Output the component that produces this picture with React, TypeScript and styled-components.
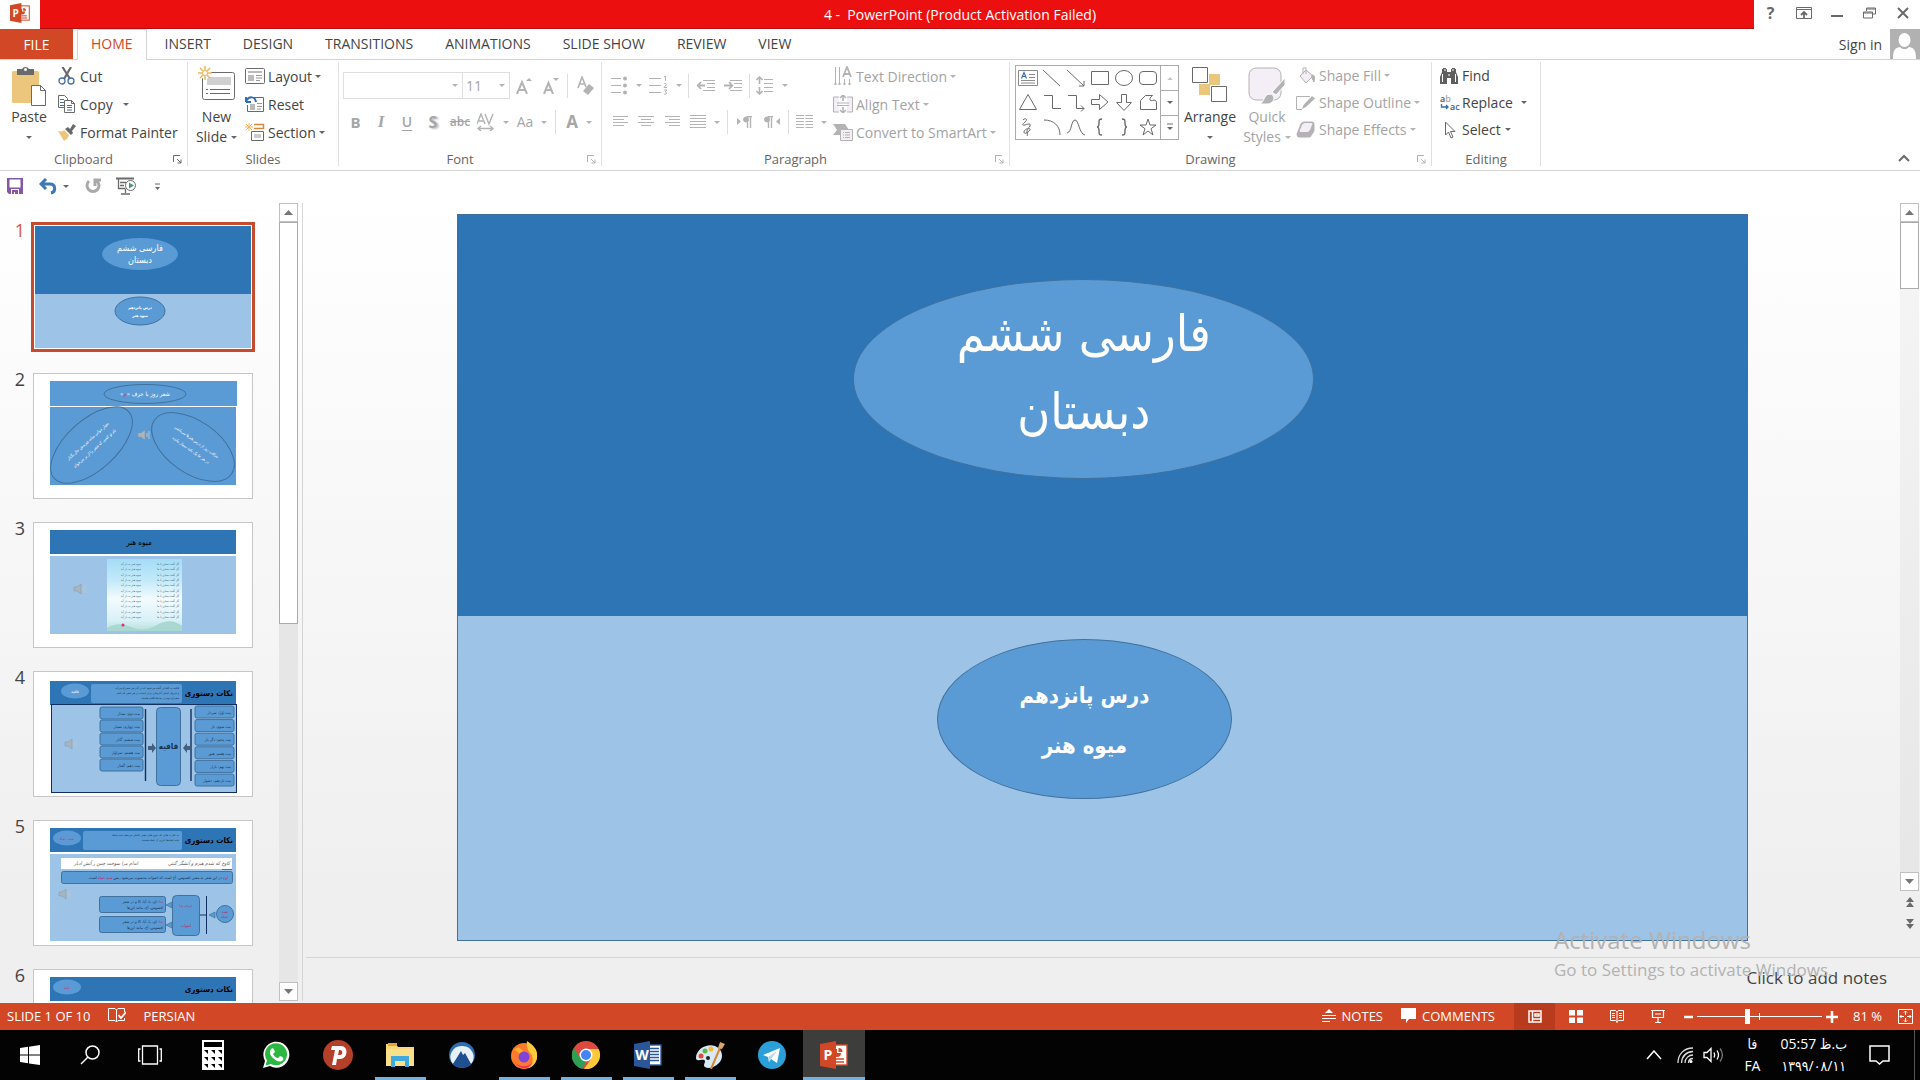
import React from "react";
import styled, { createGlobalStyle, css } from "styled-components";

const ui = `"Open Sans", "Noto Sans", "DejaVu Sans", sans-serif`;
const farsi = `"DejaVu Sans Condensed", "DejaVu Sans", sans-serif`;
const ink = "#444444";
const faded = "#a3a3a3";
const iconInk = "#6a6a6a";
const iconFaded = "#b3b3b3";
const line = "#d5d5d5";
const brand = "#d24726";

const Global = createGlobalStyle`
  * { box-sizing: border-box; }
  body { margin: 0; background: #fff; }
  button, select, input { font-family: ${ui}; margin: 0; }
  button { border: 0; background: none; padding: 0; color: inherit; font-size: inherit; }
  svg { display: block; flex: none; }
`;

const App_ = styled.div`
  display: flex;
  flex-direction: column;
  height: 100vh;
  overflow: hidden;
  font-family: ${ui};
  font-size: 14px;
  color: ${ink};
  background: linear-gradient(#fff 0, #fff 200px, #efefef 900px);
`;

/* ---------- title bar ---------- */
const TitleBar = styled.header`
  display: flex;
  height: 29px;
  background: #fff;
`;
const AppBadge = styled.div`
  width: 40px;
  display: flex;
  align-items: center;
  justify-content: center;
  padding-bottom: 3px;
`;
const TitleText = styled.div`
  flex: 1;
  display: flex;
  align-items: center;
  justify-content: center;
  padding-left: 126px;
  background: #eb0f0f;
  border-bottom: 1px solid #b01010;
  color: #fff;
  white-space: pre;
`;
const WindowControls = styled.div`
  display: flex;
  align-items: center;
  width: 166px;
  padding: 0 1px 3px 0;
`;
const WindowButton = styled.button`
  width: 33px;
  height: 26px;
  display: flex;
  align-items: center;
  justify-content: center;
  color: ${iconInk};
  font-weight: 700;
  font-size: 16px;
`;

/* ---------- tabs ---------- */
const TabRow = styled.nav`
  display: flex;
  align-items: stretch;
  height: 31px;
  border-bottom: 1px solid ${line};
  gap: 4px;
`;
const Tab = styled.button<{ $active?: boolean }>`
  padding: 0 13px 3px;
  border: 1px solid transparent;
  border-bottom: 0;
  ${(p) =>
    p.$active &&
    css`
      color: ${brand};
      border-color: ${line};
      background: #fff;
      margin-bottom: -1px;
    `}
`;
const FileTab = styled.button`
  width: 73px;
  background: ${brand};
  color: #fff;
`;
const SignIn = styled.button`
  margin-left: auto;
  display: flex;
  align-items: center;
  gap: 8px;
`;

/* ---------- ribbon ---------- */
const Ribbon = styled.section`
  display: flex;
  height: 111px;
  padding: 2px 0 4px;
  border-bottom: 1px solid ${line};
  background: #fff;
`;
const Group = styled.div<{ $w: number }>`
  display: flex;
  flex-direction: column;
  flex: none;
  width: ${(p) => p.$w}px;
  border-right: 1px solid #e1e1e1;
`;
const GroupBody = styled.div<{ $pad: number }>`
  display: flex;
  align-items: flex-start;
  flex: 1;
  padding-left: ${(p) => p.$pad}px;
`;
const GroupFoot = styled.div`
  display: flex;
  align-items: center;
  height: 14px;
  font-size: 13px;
  line-height: 14px;
  color: #666;
  text-align: center;
  span {
    flex: 1;
  }
  svg {
    margin: 0 5px 0 6px;
  }
`;
const Column = styled.div<{ $row: number; $left: number }>`
  display: grid;
  grid-auto-rows: ${(p) => p.$row}px;
  margin-left: ${(p) => p.$left}px;
  justify-items: start;
`;
const SmallButton = styled.button<{ $off?: boolean; $gap: number; $wide?: boolean }>`
  display: flex;
  align-items: center;
  gap: ${(p) => p.$gap}px;
  white-space: nowrap;
  color: ${(p) => (p.$off ? faded : ink)};
  & > i {
    margin-left: ${(p) => (p.$wide ? 6 : 0)}px;
  }
`;
const BigButton = styled.button<{ $w: number; $off?: boolean }>`
  display: flex;
  flex-direction: column;
  align-items: center;
  width: ${(p) => p.$w}px;
  padding-top: 4px;
  line-height: 20px;
  color: ${(p) => (p.$off ? faded : ink)};
`;
const BigIcon = styled.span`
  display: flex;
  align-items: flex-start;
  height: 41px;
`;
const LabelLine = styled.span`
  display: flex;
  align-items: center;
  gap: 4px;
  height: 20px;
`;
const Caret = styled.i<{ $off?: boolean }>`
  flex: none;
  width: 0;
  height: 0;
  border: 3px solid transparent;
  border-top-color: ${(p) => (p.$off ? iconFaded : "#666")};
  border-bottom: 0;
`;
const Rows = styled.div`
  display: grid;
  gap: 12px;
  padding-top: 10px;
`;
const ToolRow = styled.div<{ $h: number }>`
  display: flex;
  align-items: center;
  height: ${(p) => p.$h}px;
`;
const Tool = styled.button<{ $w: number }>`
  width: ${(p) => p.$w}px;
  height: 22px;
  display: flex;
  align-items: center;
  justify-content: center;
  gap: 8px;
  color: #a6a6a6;
`;
const Glyph = styled.span<{ $kind?: "b" | "i" | "u" | "s" | "x" | "A" }>`
  font-size: 14px;
  line-height: 18px;
  ${(p) => p.$kind === "b" && "font-weight: 700; font-size: 15px;"}
  ${(p) => p.$kind === "i" && `font: italic 700 17px "Liberation Serif", serif;`}
  ${(p) => p.$kind === "u" && "font-weight: 600; text-decoration: underline; text-underline-offset: 3px;"}
  ${(p) => p.$kind === "s" && "font-weight: 700; font-size: 16px; text-shadow: 2px 1px 2px #bbb;"}
  ${(p) => p.$kind === "x" && "font-weight: 600; font-size: 12px; text-decoration: line-through;"}
  ${(p) => p.$kind === "A" && "font-weight: 700; font-size: 17px;"}
`;
const Split = styled.span`
  width: 1px;
  height: 24px;
  margin: 0 3px;
  background: #dedede;
`;
const Combo = styled.label<{ $w: number }>`
  display: flex;
  align-items: center;
  width: ${(p) => p.$w}px;
  height: 27px;
  padding-right: 4px;
  border: 1px solid #dedede;
  & + & {
    margin-left: -1px;
  }
  select {
    flex: 1;
    min-width: 0;
    appearance: none;
    border: 0;
    background: none;
    padding: 0 3px;
    font-size: 14px;
    color: ${faded};
    opacity: 1;
  }
`;
const Gallery = styled.div`
  display: flex;
  width: 164px;
  height: 75px;
  margin-top: 3px;
  border: 1px solid #ababab;
`;
const GalleryGrid = styled.div`
  flex: 1;
  display: grid;
  grid-template-columns: repeat(6, 1fr);
  grid-template-rows: repeat(3, 1fr);
  button {
    display: grid;
    place-items: center;
  }
`;
const GalleryScroll = styled.div`
  display: grid;
  grid-template-rows: repeat(3, 1fr);
  width: 18px;
  border-left: 1px solid #ababab;
  button {
    display: grid;
    place-items: center;
  }
  button + button {
    border-top: 1px solid #ababab;
  }
`;
const Collapse = styled.button`
  margin: auto 6px 0 auto;
  padding: 4px;
`;

/* ---------- quick access ---------- */
const QuickBar = styled.div`
  display: flex;
  align-items: center;
  height: 32px;
  padding: 0 0 2px 7px;
`;
const QuickButton = styled.button<{ $right: number }>`
  display: flex;
  align-items: center;
  gap: 6px;
  margin-right: ${(p) => p.$right}px;
`;

/* ---------- workspace ---------- */
const Workspace = styled.div`
  display: flex;
  flex: 1;
  min-height: 0;
`;
const SlidePane = styled.aside`
  display: flex;
  width: 303px;
  padding-right: 4px;
  border-right: 1px solid ${line};
  margin-bottom: 2px;
`;
const SlideList = styled.ol`
  flex: 1;
  min-width: 0;
  margin: 0 0 -2px;
  padding: 21px 0 0;
  list-style: none;
  overflow: hidden;
`;
const SlideItem = styled.li<{ $on?: boolean }>`
  display: flex;
  height: 149px;
  color: ${(p) => (p.$on ? "#d9593c" : ink)};
`;
const SlideNumber = styled.span`
  width: 33px;
  padding-right: 8px;
  text-align: right;
  font-size: 18px;
  line-height: 13px;
`;
const Thumb = styled.button<{ $on?: boolean }>`
  width: 220px;
  height: 126px;
  background: #fff;
  border: 1px solid ${(p) => (p.$on ? "#fff" : "#c6c6c6")};
  outline: ${(p) => (p.$on ? "3px solid #c64c2e" : "none")};
  outline-offset: -1px;
  overflow: hidden;
  svg {
    margin: -1px;
  }
`;
const ScrollBar = styled.div<{ $track: string }>`
  display: flex;
  flex-direction: column;
  flex: none;
  width: 19px;
  background: ${(p) => p.$track};
`;
const ScrollButton = styled.button`
  display: grid;
  place-items: center;
  height: 19px;
  background: #fff;
  border: 1px solid #c0c0c0;
`;
const ScrollThumb = styled.div<{ $share: number }>`
  flex: ${(p) => p.$share} 0 0;
  background: #fff;
  border: 1px solid #ababab;
`;
const ScrollRest = styled.div<{ $share: number }>`
  flex: ${(p) => p.$share} 0 0;
`;
const PagedScroll = styled.div`
  display: flex;
  flex-direction: column;
  flex: none;
  width: 19px;
  margin-right: 1px;
  padding-bottom: 22px;
`;
const TallScroll = styled(ScrollBar)`
  flex: 1;
`;
const PageButton = styled.button`
  display: grid;
  place-items: center;
  height: 22px;
`;
const Editor = styled.main`
  flex: 1;
  display: flex;
  flex-direction: column;
  min-width: 0;
`;
const Stage = styled.div`
  flex: 1;
  min-height: 0;
  display: flex;
  justify-content: center;
  align-items: flex-start;
  padding: 11px 0 0 2px;
`;
const Slide = styled.article`
  position: relative;
  width: 81%;
  aspect-ratio: 16 / 9;
  display: flex;
  flex-direction: column;
`;
const SlideTop = styled.div`
  flex: 403;
  background: #2e75b6;
  border-top: 1px solid #41719c;
`;
const SlideBottom = styled.div`
  flex: 325;
  background: #9dc3e6;
  border: 1px solid #41719c;
  border-top: 0;
`;
const Oval = styled.div<{ $x: number; $y: number; $w: number; $h: number }>`
  position: absolute;
  left: ${(p) => p.$x}%;
  top: ${(p) => p.$y}%;
  width: ${(p) => p.$w}%;
  height: ${(p) => p.$h}%;
  display: flex;
  flex-direction: column;
  align-items: center;
  justify-content: center;
  border-radius: 50%;
  border: 1px solid #41719c;
  background: #5b9bd5;
  color: #fff;
  direction: rtl;
  white-space: nowrap;
`;
const BookTitle = styled.h1`
  margin: 0;
  padding-bottom: 12px;
  text-align: center;
  font: 400 50px/78px ${farsi};
`;
const LessonTitle = styled.h2`
  margin: 0;
  padding-top: 4px;
  text-align: center;
  font: 700 22px/50px ${farsi};
`;
const Notes = styled.div`
  position: relative;
  height: 46px;
  margin-left: 3px;
  border-top: 1px solid ${line};
  padding: 2px 33px 0 12px;
  input {
    width: 100%;
    height: 34px;
    border: 0;
    background: none;
    padding: 0;
    text-align: right;
    font-size: 17px;
    color: ${ink};
  }
  input::placeholder {
    color: ${ink};
    opacity: 1;
  }
`;
const Watermark = styled.div`
  position: absolute;
  right: 86px;
  bottom: 19px;
  width: 280px;
  pointer-events: none;
  white-space: nowrap;
  color: #b2b2b2;
  font-size: 17px;
  line-height: 28px;
  strong {
    display: block;
    font-weight: 400;
    font-size: 24px;
    line-height: 32px;
  }
`;

/* ---------- status bar ---------- */
const StatusBar = styled.footer`
  display: flex;
  align-items: center;
  height: 27px;
  padding: 0 7px;
  background: ${brand};
  color: #fff;
  font-size: 13px;
`;
const StatusItem = styled.button<{ $right: number }>`
  display: flex;
  align-items: center;
  gap: 6px;
  padding-bottom: 2px;
  margin-right: ${(p) => p.$right}px;
`;
const StatusRight = styled.div`
  display: flex;
  align-items: center;
  height: 100%;
  margin-left: auto;
`;
const ViewButton = styled.button<{ $on?: boolean }>`
  display: grid;
  place-items: center;
  width: 41px;
  height: 27px;
  background: ${(p) => (p.$on ? "#b83b1d" : "none")};
`;
const ZoomControl = styled.div`
  display: flex;
  align-items: center;
  gap: 4px;
  margin-left: 6px;
  input {
    appearance: none;
    width: 125px;
    height: 16px;
    margin: 0;
    background: linear-gradient(#fff, #fff) center / 100% 1px no-repeat,
      linear-gradient(#fff, #fff) center / 1px 7px no-repeat;
  }
  input::-webkit-slider-thumb {
    appearance: none;
    width: 5px;
    height: 15px;
    background: #fff;
  }
`;
const ZoomValue = styled.span`
  width: 60px;
  padding: 0 0 2px 15px;
`;

/* ---------- taskbar ---------- */
const TaskBar = styled.div`
  display: flex;
  height: 50px;
  background: #030303;
  color: #fff;
`;
const TaskButton = styled.button<{ $w: number; $run?: boolean; $on?: boolean }>`
  width: ${(p) => p.$w}px;
  height: 50px;
  display: flex;
  flex-direction: column;
  align-items: center;
  justify-content: center;
  background: ${(p) => (p.$on ? "#3d3d3b" : "none")};
  padding-top: 3px;
  &::after {
    content: "";
    width: ${(p) => (p.$on ? 62 : 51)}px;
    height: 3px;
    margin-top: auto;
    background: ${(p) => (p.$run || p.$on ? "#76b0df" : "transparent")};
  }
  svg {
    margin-top: auto;
  }
`;
const Tray = styled.div`
  display: flex;
  align-items: center;
  margin-left: auto;
`;
const TrayButton = styled.button<{ $right: number }>`
  margin-right: ${(p) => p.$right}px;
`;
const TrayText = styled.div<{ $right: number }>`
  display: grid;
  justify-items: center;
  margin-right: ${(p) => p.$right}px;
  font: 14px/22px "Open Sans", ${farsi};
  white-space: nowrap;
`;
const Edge = styled.span`
  width: 1px;
  height: 100%;
  margin-right: 5px;
  background: #555;
`;

/* ---------- icons ---------- */
type IcoProps = { w: number; h: number; c?: string; sw?: number; children: React.ReactNode };
const Ico = ({ w, h, c = iconInk, sw = 1, children }: IcoProps) => (
  <svg width={w} height={h} viewBox={`0 0 ${w} ${h}`} fill="none" stroke={c} strokeWidth={sw} aria-hidden="true">
    {children}
  </svg>
);

const OfficeLogo = ({ letter, color, dark, size }: { letter: string; color: string; dark: string; size: number }) => (
  <svg width={size} height={size} viewBox="0 0 28 28" aria-hidden="true">
    <rect x="13" y="4" width="14" height="20" fill="#fff" stroke={color} strokeWidth="1.4" />
    {letter === "P" ? (
      <g>
        <path d="M17 8a4 4 0 1 0 4 4h-4z" fill={color} />
        <path d="M18.5 7v4h4a4 4 0 0 0-4-4z" fill={color} />
        <path d="M16 18h8M16 21h8" stroke={color} strokeWidth="1.4" />
      </g>
    ) : (
      <path d="M16 7.500h9M16 10.500h9M16 13.500h9M16 16.500h9M16 19.500h9" stroke={color} strokeWidth="1.4" />
    )}
    <path d="M0 3 16 0v28L0 25z" fill={dark} />
    <text x="8" y="19" fill="#fff" fontSize="14" fontWeight="700" textAnchor="middle" fontFamily="Open Sans, sans-serif">
      {letter}
    </text>
  </svg>
);

const Launcher = ({ off }: { off?: boolean }) => (
  <Ico w={9} h={9} c={off ? iconFaded : iconInk}>
    <path d="M.5 7V.5H7M4 4l4 4M8 4.500V8H4.500" />
  </Ico>
);

const Lines = ({ xs, h = 12, w = 17 }: { xs: [number, number][]; h?: number; w?: number }) => (
  <Ico w={w} h={h} c={iconFaded}>
    {xs.map(([a, b], i) => (
      <path key={i} d={`M${a} ${i * 3 + 0.5}H${b}`} />
    ))}
  </Ico>
);

const shapeIcons: [string, React.ReactNode][] = [
  ["Text box", <><path d="M.5 2.500h19v15H.5zM11 6.500h6M11 9.500h6M3 12.500h14M3 15h14" stroke="#8a8a8a" /><path d="m3.500 10.500 2.500-6 2.500 6M4.500 8.500h3" stroke="#3b6fb0" strokeWidth="1.2" /></>],
  ["Line", <path d="m1 2 17 16" />],
  ["Arrow", <path d="m1 2 17 16M18 13v5h-5" />],
  ["Rectangle", <path d="M1.500 3.500h17v13h-17z" />],
  ["Oval", <ellipse cx="10" cy="10" rx="8.500" ry="7.500" />],
  ["Rounded rectangle", <rect x="1.500" y="3.500" width="17" height="13" rx="3.500" />],
  ["Triangle", <path d="M10 2.500 18.500 17.500h-17z" />],
  ["Elbow", <path d="M2 3.500h8.500v13H19" />],
  ["Elbow arrow", <path d="M2 3.500h8.500v13H18M15 13.500l3 3-3 3" />],
  ["Right arrow", <path d="M1.500 7.500h8v-5L18 10l-8.500 7.500v-5h-8z" />],
  ["Down arrow", <path d="M7.500 2.500v8h-5L10 18.500l7.500-8h-5v-8z" />],
  ["Freeform", <path d="M2.500 17.500v-9l5-5h7c-4 3-3 6 0 5 2-1 4 0 4 2v7z" />],
  ["Scribble", <path d="M5 3c3-3 5 0 2 2s-3 4 0 3 6-2 5 1-6 3-6 6 5 0 6-2-3-2-3 1 1 4 0 5" />],
  ["Arc", <path d="M2 3c10 0 16 6 16 15" />],
  ["Curve", <path d="M1 16c5-1 4-13 8-13s4 14 10 15" />],
  ["Left brace", <path d="M12 2c-3 0-3 1-3 4s-1 4-2 4c1 0 2 1 2 4s0 4 3 4" strokeWidth="1.4" />],
  ["Right brace", <path d="M8 2c3 0 3 1 3 4s1 4 2 4c-1 0-2 1-2 4s0 4-3 4" strokeWidth="1.4" />],
  ["Star", <path d="m10 2 2 6h6l-5 3.700 2 6.300-5-4-5 4 2-6.300L2 8h6z" />],
];

const UpTri = ({ c = "#777" }) => (
  <svg width="9" height="5" viewBox="0 0 9 5" aria-hidden="true"><path d="M4.500 0 9 5H0z" fill={c} /></svg>
);
const DownTri = ({ c = "#777" }) => (
  <svg width="9" height="5" viewBox="0 0 9 5" aria-hidden="true"><path d="M4.500 5 9 0H0z" fill={c} /></svg>
);

/* ---------- slide thumbnails ---------- */
const rtl = { direction: "rtl" as const, fontFamily: farsi };
const mid = "#5b9bd5";
const edge = "#41719c";
const Speaker = ({ x, y }: { x: number; y: number }) => (
  <g transform={`translate(${x} ${y})`}>
    <path d="M-5-2h3l4-3v10l-4-3h-3z" fill="#a9b4bf" stroke="#8795a3" strokeWidth=".5" />
    <path d="M4-2v4M6-4v8" stroke="#b9c6d2" />
  </g>
);
const Board = ({ children }: { children: React.ReactNode }) => (
  <svg width="220" height="126" viewBox="0 0 220 126" aria-hidden="true">{children}</svg>
);
type HeadingProps = { oval: string; body?: string[]; y?: number; left?: number };
const Heading = ({ oval, body, y = 8, left = 50 }: HeadingProps) => (
  <g>
    <rect x="17" y={y} width="186" height="24" fill="#2e75b6" />
    <ellipse cx={left - 16} cy={y + 10} rx="14" ry="7.500" fill={mid} />
    <text x={left - 16} y={y + 12} fontSize="4" textAnchor="middle" fill={y === 8 ? "#d6336c" : "#fff"} {...rtl}>{oval}</text>
    {body && <rect x={left} y={y + 3} width={149 - left} height="19" rx="2" fill={mid} />}
    {body && body.map((t, i) => (
      <text key={t} x="146" y={y + 8 + i * 5} fontSize="3" fill="#16324d" {...rtl}>{t}</text>
    ))}
    <text x="200" y={y + 15} fontSize="8" fontWeight="700" fill="#000" {...rtl}>نکات دستوری</text>
  </g>
);

const Slide1 = () => (
  <Board>
    <rect x="2" y="2" width="216" height="68" fill="#2e75b6" />
    <rect x="2" y="70" width="216" height="54" fill="#9dc3e6" />
    <ellipse cx="107" cy="30" rx="38" ry="16" fill={mid} />
    <text x="107" y="27" fontSize="9" textAnchor="middle" fill="#fff" {...rtl}>فارسی ششم</text>
    <text x="107" y="39" fontSize="9" textAnchor="middle" fill="#fff" {...rtl}>دبستان</text>
    <ellipse cx="107" cy="87" rx="25" ry="14" fill={mid} stroke={edge} />
    <text x="107" y="85" fontSize="4" fontWeight="700" textAnchor="middle" fill="#fff" {...rtl}>درس پانزدهم</text>
    <text x="107" y="93" fontSize="4" fontWeight="700" textAnchor="middle" fill="#fff" {...rtl}>میوه هنر</text>
  </Board>
);
const Slide2 = () => (
  <Board>
    <rect x="17" y="8" width="187" height="25" fill={mid} />
    <rect x="17" y="34" width="186" height="78" fill={mid} />
    <ellipse cx="112" cy="21" rx="41" ry="9.500" fill="none" stroke={edge} />
    <text x="112" y="23" fontSize="6" textAnchor="middle" fill="#fff" {...rtl}>شعر روز با حرف «<tspan fill="#d6336c">م</tspan>»</text>
    <g transform="translate(58.500 72) rotate(-42)">
      <ellipse rx="50" ry="25" fill="none" stroke={edge} />
      <text y="-4" fontSize="4" textAnchor="middle" fill="#fff" {...rtl}>معیار جوانی میانه هیزمش حال بگذار</text>
      <text y="6" fontSize="4" textAnchor="middle" fill="#fff" {...rtl}>نام تو کسی که شعر را از بر می‌خواند</text>
    </g>
    <g transform="translate(160 74) rotate(35)">
      <ellipse rx="47" ry="26" fill="none" stroke={edge} />
      <text y="-5" fontSize="4" textAnchor="middle" fill="#fff" {...rtl}>مراقب روز از درس هنرها می‌باشی</text>
      <text y="5" fontSize="4" textAnchor="middle" fill="#fff" {...rtl}>در هر جا یک نکته بسیار مانده</text>
    </g>
    <Speaker x={110} y={62} />
  </Board>
);
const Slide3 = () => (
  <Board>
    <rect x="17" y="8" width="186" height="24" fill="#2e75b6" />
    <rect x="17" y="34" width="186" height="78" fill="#9dc3e6" />
    <text x="106" y="23" fontSize="8" textAnchor="middle" fill="#000" {...rtl}>میوه هنر</text>
    <defs>
      <linearGradient id="sky" x1="0" y1="0" x2="0" y2="1">
        <stop offset="0" stopColor="#a4dcf6" /><stop offset=".3" stopColor="#c3eafa" /><stop offset=".55" stopColor="#f3fbfe" /><stop offset=".85" stopColor="#d9f1f8" /><stop offset="1" stopColor="#b5e0d8" />
      </linearGradient>
    </defs>
    <rect x="74" y="37" width="75" height="72" fill="url(#sky)" />
    <path d="M74 106q12-7 24-1t26-2 25 1v5H74z" fill="#a8d8cf" />
    {Array.from({ length: 11 }, (_, i) => (
      <g key={i} fontSize="3" fill="#4a6270">
        <text x="146" y={43 + i * 5.3} {...rtl}>گل گفت سخن با ما</text>
        <text x="108" y={43 + i * 5.3} {...rtl}>میوه هنر به بار آید</text>
      </g>
    ))}
    <circle cx="90" cy="103" r="1.500" fill="#d6336c" />
    <Speaker x={46} y={67} />
  </Board>
);
const Slide4 = () => (
  <Board>
    <Heading y={10} left={58} oval="قافیه" body={["قافیه به کلماتی گفته می‌شود که در آخر هر مصراع می‌آید", "و حروف اصلی آخرشان برابر است، در هر شعر که باشد", "مصراع دوم در بیت‌ها قافیه هستند."]} />
    <rect x="18.500" y="33.500" width="185" height="88" fill="#9dc3e6" stroke="#12305f" />
    {["بیت اول: سردار", "بیت سوم: بار", "بیت پنجم: دگر بار", "بیت هفتم: هنوز", "بیت نهم: بازار", "بیت یازدهم: دشوار"].map((t, i) => (
      <g key={t}>
        <rect x="162" y={35 + i * 13.6} width="39" height="12" rx="2" fill={mid} stroke={edge} />
        <text x="198" y={43 + i * 13.6} fontSize="4" fill="#16324d" {...rtl}>{t}</text>
      </g>
    ))}
    {["بیت دوم: نمدار", "بیت چهارم: بسیار", "بیت ششم: گذار", "بیت هشتم: سزاوار", "بیت دهم: گفتار"].map((t, i) => (
      <g key={t}>
        <rect x="67" y={36 + i * 13} width="43" height="12" rx="2" fill={mid} stroke={edge} />
        <text x="107" y={44 + i * 13} fontSize="4" fill="#16324d" {...rtl}>{t}</text>
      </g>
    ))}
    <rect x="123.500" y="36.500" width="24" height="78" rx="4" fill={mid} stroke={edge} />
    <text x="135.500" y="78" fontSize="8" fontWeight="700" textAnchor="middle" fill="#16324d" {...rtl}>قافیه</text>
    <path d="M112.500 38v72M158 38v72" stroke="#12305f" strokeWidth="1.400" />
    <path d="M115 75h4v-3l4 5-4 5v-3h-4zM158 75h-4v-3l-4 5 4 5v-3h4z" fill="#41607f" />
    <Speaker x={37} y={73} />
  </Board>
);
const Slide5 = () => (
  <Board>
    <Heading oval="شبه جمله" body={["به عبارت هایی که بدون فعل معنی کاملی می‌دهند شبه جمله", "شبه جمله‌ها جزیی از جمله هستند."]} />
    <rect x="17" y="34" width="186" height="87" fill="#9dc3e6" />
    <rect x="28" y="38" width="171" height="11" fill="#fff" />
    <text x="197" y="45" fontSize="5" fontStyle="italic" fill="#555" {...rtl}>کاوخ که شدم هیزم و آتشگر گیتی</text>
    <text x="105" y="45" fontSize="5" fontStyle="italic" fill="#555" {...rtl}>اندام مرا سوخت چنین ز آتش ادبار</text>
    <path d="M189 49.500h10" stroke="#d6334c" />
    <rect x="28.500" y="51.500" width="171" height="12" rx="2" fill={mid} stroke={edge} />
    <text x="195" y="59" fontSize="4" fill="#16324d" {...rtl}><tspan fill="#c2255c">آوخ</tspan> در این شعر به معنی افسوس، آخ است که اصوات محسوب می‌شود، پس <tspan fill="#c2255c">شبه جمله</tspan> است.</text>
    {[76, 96].map((y) => (
      <g key={y}>
        <rect x="66.500" y={y + 0.5} width="66" height="16" rx="2" fill={mid} stroke={edge} />
        <text x="130" y={y + 7} fontSize="4" fill="#16324d" {...rtl}><tspan fill="#c2255c">ندا:</tspan> ای، یا، آیا، الا و در شعر</text>
        <text x="130" y={y + 13} fontSize="4" fill="#16324d" {...rtl}>افسوس، آخ، مانند این‌ها</text>
        <path d={`M139 ${y + 6}v6l-6-3z`} fill={mid} stroke={edge} strokeWidth=".7" />
      </g>
    ))}
    <rect x="139.500" y="75.500" width="27" height="40" rx="4" fill={mid} stroke={edge} />
    <text x="153" y="87" fontSize="4" textAnchor="middle" fill="#c2255c" {...rtl}>حرف ندا</text>
    <text x="153" y="107" fontSize="4" textAnchor="middle" fill="#c2255c" {...rtl}>اصوات</text>
    <path d="M167 95h6M173.500 76v38" stroke="#12305f" />
    <path d="M182 92v6l-6-3z" fill={mid} stroke={edge} strokeWidth=".7" />
    <circle cx="192" cy="94" r="8.500" fill={mid} stroke={edge} />
    <text x="192" y="93" fontSize="4" textAnchor="middle" fill="#c2255c" {...rtl}>شبه</text>
    <text x="192" y="98" fontSize="4" textAnchor="middle" fill="#c2255c" {...rtl}>جمله</text>
    <Speaker x={31} y={74} />
  </Board>
);
const Slide6 = () => (
  <Board><Heading oval="نکته" /></Board>
);
const slides = [Slide1, Slide2, Slide3, Slide4, Slide5, Slide6];

const CalcIcon = () => (
  <svg width="22" height="30" viewBox="0 0 22 30" aria-hidden="true">
    <rect width="22" height="30" fill="#fff" /><rect x="2" y="2" width="18" height="5" fill="#000" />
    {[10, 17, 24].map((y) => [2, 9, 16].map((x) => <path key={`${x}-${y}`} d={`M${x} ${y}h4v4z`} fill="#000" />))}
  </svg>
);

export default function App() {
  return (
    <App_>
      <Global />
      <TitleBar>
        <AppBadge><OfficeLogo letter="P" color="#d24726" dark="#d24726" size={20} /></AppBadge>
        <TitleText>4 -  PowerPoint (Product Activation Failed)</TitleText>
        <WindowControls>
          <WindowButton aria-label="Help">?</WindowButton>
          <WindowButton aria-label="Ribbon display options">
            <Ico w={16} h={12}><path d="M.5.5h15v11H.5zM1 2.500h14" /><path d="M8 11V5M5 8l3-3 3 3" strokeWidth="1.800" /></Ico>
          </WindowButton>
          <WindowButton aria-label="Minimize"><Ico w={12} h={12} sw={2}><path d="M0 9h12" /></Ico></WindowButton>
          <WindowButton aria-label="Restore"><Ico w={13} h={12}><path d="M3.500 4V1h9v6H10M3.500 2h9M.5 5h9v6h-9zM.5 6h9" /></Ico></WindowButton>
          <WindowButton aria-label="Close"><Ico w={12} h={12} sw={2}><path d="m1 1 10 10M11 1 1 11" /></Ico></WindowButton>
        </WindowControls>
      </TitleBar>

      <TabRow>
        <FileTab>FILE</FileTab>
        {["HOME", "INSERT", "DESIGN", "TRANSITIONS", "ANIMATIONS", "SLIDE SHOW", "REVIEW", "VIEW"].map((t, i) => (
          <Tab key={t} $active={i === 0}>{t}</Tab>
        ))}
        <SignIn>
          Sign in
          <svg width="30" height="30" viewBox="0 0 30 30" aria-hidden="true">
            <rect width="30" height="30" fill="#b1b1b1" />
            <ellipse cx="14.500" cy="11" rx="6" ry="7" fill="#fff" />
            <path d="M3 30c0-9 2-11 7-12 3 3 6 3 9 0 5 1 7 3 7 12z" fill="#fff" />
          </svg>
        </SignIn>
      </TabRow>

      <Ribbon>
        <Group $w={188}>
          <GroupBody $pad={7}>
            <BigButton $w={44}>
              <BigIcon>
                <svg width="34" height="40" viewBox="0 0 34 40" aria-hidden="true">
                  <rect x="0" y="5" width="27" height="32" rx="1.500" fill="#ecc67c" />
                  <path d="M5 3h5a4 4 0 0 1 7 0h5v6H5z" fill="#6a6a6a" /><circle cx="13.500" cy="3.500" r="1.500" fill="#fff" />
                  <path d="M19.500 19.500h9l5 5v15h-14zM28.500 19.500v5h5" fill="#fff" stroke="#6a6a6a" />
                </svg>
              </BigIcon>
              <LabelLine>Paste</LabelLine>
              <LabelLine><Caret /></LabelLine>
            </BigButton>
            <Column $row={28} $left={7}>
              <SmallButton $gap={4}>
                <Ico w={18} h={18}><path d="M4.500 0 12 12M13 0 6 12" strokeWidth="2.200" /><g stroke="#4472a8" strokeWidth="1.300"><circle cx="4" cy="14" r="3" /><circle cx="13" cy="14" r="3" /></g></Ico>
                Cut
              </SmallButton>
              <SmallButton $gap={4} $wide>
                <Ico w={18} h={18}><path d="M.5.5h6l3 3v9h-9z" fill="#fff" /><path d="M6.500 5.500h7l3 3v9h-10z" fill="#fff" /><path d="M13.500 5.500v3h3" /><path d="M2 4.500h4M2 7.500h4M2 10.500h4M9 10.500h5M9 12.500h5M9 15h5" stroke="#4472a8" /></Ico>
                Copy<Caret />
              </SmallButton>
              <SmallButton $gap={4}>
                <svg width="18" height="18" viewBox="0 0 18 18" aria-hidden="true"><path d="M0 8c4 1 5 0 6-1l5 5c-1 3-2 4-5 6z" fill="#ecc67c" /><path d="m7 6 3-2 2 2 3-5 3 2-4 5 1 2-2 2z" fill="#6a6a6a" /></svg>
                Format Painter
              </SmallButton>
            </Column>
          </GroupBody>
          <GroupFoot><span>Clipboard</span><Launcher /></GroupFoot>
        </Group>

        <Group $w={151}>
          <GroupBody $pad={6}>
            <BigButton $w={45}>
              <BigIcon>
                <Ico w={38} h={36}>
                  <rect x="4.500" y="6.500" width="32" height="27" rx="2" fill="#fff" />
                  <rect x="9" y="11" width="24" height="8" fill="#d0d0d0" stroke="none" />
                  <path d="M8 23.500h2M12 23.500h20M8 27.500h2M12 27.500h20" />
                  <circle cx="7" cy="7" r="6" fill="#fff" stroke="none" />
                  <path d="M7 0v14M0 7h14M2 2l10 10M12 2 2 12" stroke="#ecb95e" strokeWidth="1.500" /><circle cx="7" cy="7" r="2.500" fill="#fff" stroke="#ecb95e" />
                </Ico>
              </BigIcon>
              <LabelLine>New</LabelLine>
              <LabelLine>Slide<Caret /></LabelLine>
            </BigButton>
            <Column $row={28} $left={6}>
              <SmallButton $gap={3}>
                <Ico w={20} h={16}><rect x=".5" y=".5" width="19" height="15" rx="1" /><rect x="3" y="3" width="14" height="2" fill="#bbb" stroke="none" /><rect x="3" y="7" width="6" height="6" fill="#bbb" stroke="none" /><path d="M11 7.500h6M11 10h6M11 12.500h4" stroke="#999" /></Ico>
                <span>Layout</span><Caret />
              </SmallButton>
              <SmallButton $gap={3}>
                <Ico w={20} h={18}><path d="M9 2.500h9.500v14h-16V10" /><rect x="5" y="9" width="5" height="6" fill="#bbb" stroke="none" /><path d="M12 8.500h5M12 11.500h5M12 14h4" stroke="#999" /><path d="M1 7h5M1 7V2M1 6c3-5 9-5 10 1" stroke="#2f6eb0" strokeWidth="2" /></Ico>
                Reset
              </SmallButton>
              <SmallButton $gap={3}>
                <Ico w={20} h={18}><path d="M4 0v8M0 4h8M1 1l6 6M7 1 1 7" stroke="#ecb95e" /><path d="M9 1.500h9.500v4H9" stroke="#d78a3c" strokeWidth="1.500" /><path d="M6.500 8.500h12v9h-12z" /><rect x="9" y="11" width="7" height="4" fill="#ccc" stroke="none" /></Ico>
                <span>Section</span><Caret />
              </SmallButton>
            </Column>
          </GroupBody>
          <GroupFoot><span>Slides</span></GroupFoot>
        </Group>

        <Group $w={263}>
          <GroupBody $pad={4}>
            <Rows>
              <ToolRow $h={27}>
                <Combo $w={120}><select aria-label="Font" disabled><option></option></select><Caret $off /></Combo>
                <Combo $w={48}><select aria-label="Font size" disabled><option>11</option></select><Caret $off /></Combo>
                <Tool $w={28} aria-label="Increase font size"><Ico w={16} h={16} c={iconFaded} sw={2}><path d="m1 16 5-12 5 12M3 12h6" /><path d="m10 3 3-3 3 3z" fill={iconFaded} stroke="none" /></Ico></Tool>
                <Tool $w={26} aria-label="Decrease font size"><Ico w={16} h={16} c={iconFaded} sw={2}><path d="m1 16 4.500-11L10 16M3 12h5" /><path d="m10 0 3 3 3-3z" fill={iconFaded} stroke="none" /></Ico></Tool>
                <Split />
                <Tool $w={30} aria-label="Clear formatting"><Ico w={18} h={20} c={iconFaded} sw={1.6}><path d="m1 12 4-11 4 10M3 8h5" /><path d="m6 15 6-7 5 4-6 7z" fill={iconFaded} stroke="none" /></Ico></Tool>
              </ToolRow>
              <ToolRow $h={22}>
                <Tool $w={25}><Glyph $kind="b">B</Glyph></Tool>
                <Tool $w={26}><Glyph $kind="i">I</Glyph></Tool>
                <Tool $w={26}><Glyph $kind="u">U</Glyph></Tool>
                <Tool $w={26}><Glyph $kind="s">S</Glyph></Tool>
                <Tool $w={28}><Glyph $kind="x">abc</Glyph></Tool>
                <Tool $w={38} aria-label="Character spacing"><Ico w={18} h={18} c={iconFaded} sw={1.4}><path d="m0 11 4-10 4 10M2 8h5M8 1l4 10 4-10M1 15.500h15M4 13l-3 2.500L4 18M13 13l3 2.500-3 2.500" /></Ico><Caret $off /></Tool>
                <Tool $w={40}><Glyph>Aa</Glyph><Caret $off /></Tool>
                <Split />
                <Tool $w={40}><Glyph $kind="A">A</Glyph><Caret $off /></Tool>
              </ToolRow>
            </Rows>
          </GroupBody>
          <GroupFoot><span>Font</span><Launcher off /></GroupFoot>
        </Group>

        <Group $w={408}>
          <GroupBody $pad={5}>
            <Rows>
              <ToolRow $h={27}>
                <Tool $w={39} aria-label="Bullets"><Ico w={17} h={19} c={iconFaded}><path d="M0 2.500h10M0 9.500h10M0 16.500h10" /><g fill={iconFaded} stroke="none"><circle cx="14" cy="2.500" r="2" /><circle cx="14" cy="9.500" r="2" /><circle cx="14" cy="16.500" r="2" /></g></Ico><Caret $off /></Tool>
                <Tool $w={39} aria-label="Numbering"><Ico w={19} h={19} c={iconFaded}><path d="M0 2.500h12M0 9.500h12M0 16.500h12" /><path d="M15 1l1.500-1v5M15 8c0-1 3-1 2 1l-2 2.500h3M15 14h3l-2 2c3 0 2 3-1 2" /></Ico><Caret $off /></Tool>
                <Split />
                <Tool $w={27} aria-label="Decrease indent"><Ico w={18} h={12} c={iconFaded}><path d="M6 .5h12M10 3.500h8M10 7.500h8M6 10.500h12" /><path d="M0 5.500h8M4 2 .7 5.500 4 9" strokeWidth="1.800" /></Ico></Tool>
                <Tool $w={27} aria-label="Increase indent"><Ico w={18} h={12} c={iconFaded}><path d="M6 .5h12M10 3.500h8M10 7.500h8M6 10.500h12" /><path d="M0 5.500h8M5 2l3.300 3.500L5 9" strokeWidth="1.800" /></Ico></Tool>
                <Split />
                <Tool $w={38} aria-label="Line spacing"><Ico w={18} h={19} c={iconFaded}><path d="M8 3.500h9M8 7.500h9M8 11.500h9M8 15.500h9" /><path d="M3.500 1v7M3.500 11v7M.5 4l3-3 3 3M.5 15l3 3 3-3" strokeWidth="1.600" /></Ico><Caret $off /></Tool>
              </ToolRow>
              <ToolRow $h={22}>
                <Tool $w={26} aria-label="Align left"><Lines xs={[[0, 15], [0, 11], [0, 15], [0, 11]]} w={15} /></Tool>
                <Tool $w={26} aria-label="Center"><Lines xs={[[0, 16], [3, 13], [0, 16], [3, 13]]} w={16} /></Tool>
                <Tool $w={26} aria-label="Align right"><Lines xs={[[0, 15], [4, 15], [0, 15], [4, 15]]} w={15} /></Tool>
                <Tool $w={39} aria-label="Justify"><Lines xs={[[0, 16], [0, 16], [0, 16], [0, 16], [0, 16]]} h={14} w={16} /><Caret $off /></Tool>
                <Split />
                <Tool $w={27} aria-label="Left-to-right"><Ico w={16} h={12} c={iconFaded}><path d="M0 2v7l4-3.500zM10 1a3 3 0 0 0 0 5z" fill={iconFaded} stroke="none" /><path d="M10.500 12V.5H15M13.500 12V.5" strokeWidth="1.400" /><circle cx="9" cy="3.500" r="2.500" fill={iconFaded} /></Ico></Tool>
                <Tool $w={27} aria-label="Right-to-left"><Ico w={16} h={12} c={iconFaded}><path d="M16 2v7l-4-3.500z" fill={iconFaded} stroke="none" /><path d="M4.500 12V.5H9M7.500 12V.5" strokeWidth="1.400" /><circle cx="3" cy="3.500" r="2.500" fill={iconFaded} /></Ico></Tool>
                <Split />
                <Tool $w={38} aria-label="Columns"><Ico w={17} h={14} c={iconFaded}><path d="M0 .5h8M9.500.5H17M0 3.500h8M9.500 3.500H17M0 6.500h8M9.500 6.500H17M0 9.500h8M9.500 9.500H17M0 12.500h8M9.500 12.500H17" /></Ico><Caret $off /></Tool>
              </ToolRow>
            </Rows>
            <Column $row={28} $left={3}>
              <SmallButton $gap={3} $off>
                <Ico w={20} h={20} c={iconFaded}><path d="M2.500 1v18M6.500 1v18M11.500 13v6M16.500 13v6M1 18h3M5 18h3M10 18h3M15 18h3" /><path d="m10 11 4-10 4 10M11.500 8h5" strokeWidth="1.800" /></Ico>
                <span>Text Direction</span><Caret $off />
              </SmallButton>
              <SmallButton $gap={3} $off>
                <Ico w={20} h={18} c={iconFaded}><path d="M6 2H.5v15H6M14 2h5.500v15H14" fill="#f4eef6" /><path d="M10 0v6M10 12v6M7 3l3-3 3 3M7 15l3 3 3-3" strokeWidth="1.600" /><path d="M4 8h12M4 10.500h12" /></Ico>
                <span>Align Text</span><Caret $off />
              </SmallButton>
              <SmallButton $gap={3} $off>
                <Ico w={20} h={17} c={iconFaded}><path d="M0 0h12l4 6-4 5H0l4-5z" fill={iconFaded} stroke="none" /><path d="M7.500 5.500h12v11h-12z" fill="#f4eef6" /><path d="M10 8.500h1M12 8.500h5M10 11h1M12 11h5M10 13.500h1M12 13.500h5" /></Ico>
                <span>Convert to SmartArt</span><Caret $off />
              </SmallButton>
            </Column>
          </GroupBody>
          <GroupFoot><span>Paragraph</span><Launcher off /></GroupFoot>
        </Group>

        <Group $w={422}>
          <GroupBody $pad={5}>
            <Gallery>
              <GalleryGrid>
                {shapeIcons.map(([name, d]) => (
                  <button key={name} aria-label={name}><Ico w={20} h={20}>{d}</Ico></button>
                ))}
              </GalleryGrid>
              <GalleryScroll>
                <button aria-label="Scroll shapes up"><svg width="6" height="3" viewBox="0 0 9 5"><path d="M4.500 0 9 5H0z" fill="#c4c4c4" /></svg></button>
                <button aria-label="Scroll shapes down"><Caret /></button>
                <button aria-label="More shapes"><Ico w={8} h={8}><path d="M1 1h6" /><path d="M1 4h6L4 7z" fill={iconInk} stroke="none" /></Ico></button>
              </GalleryScroll>
            </Gallery>
            <BigButton $w={62}>
              <BigIcon>
                <Ico w={36} h={37}><rect x="17" y="8" width="11" height="11" fill="#ecc67c" stroke="none" /><rect x="7" y="18" width="11" height="11" fill="#ecc67c" stroke="none" /><path d="M.5 1.500h15v15H.5zM19.500 20.500h15v15h-15z" fill="#fff" /></Ico>
              </BigIcon>
              <LabelLine>Arrange</LabelLine>
              <LabelLine><Caret /></LabelLine>
            </BigButton>
            <BigButton $w={52} $off>
              <BigIcon>
                <Ico w={38} h={40} c={iconFaded}><rect x="1" y="2" width="32" height="32" rx="7" fill="#f4eef6" /><path d="M37 12 24 26l4 3 9-10z" fill={iconFaded} stroke="#fff" /><path d="M11 38c6-1 4-10 11-10 6 1 5 9-2 10z" fill={iconFaded} stroke="#fff" /></Ico>
              </BigIcon>
              <LabelLine>Quick</LabelLine>
              <LabelLine>Styles<Caret $off /></LabelLine>
            </BigButton>
            <Column $row={27} $left={3}>
              <SmallButton $gap={3} $off>
                <Ico w={20} h={18} c={iconFaded}><path d="m4 9 6-6 7 6-7 7z" fill="#f4eef6" /><path d="M7 7V1h3v6" /><path d="M16 8c3 0 3 3 2 7-1-2-3-4-2-7z" fill={iconFaded} /></Ico>
                <span>Shape Fill</span><Caret $off />
              </SmallButton>
              <SmallButton $gap={3} $off>
                <Ico w={20} h={18} c={iconFaded}><path d="M14 2.500H.5v13H6" /><path d="m6 15 1.500-4L16 2l3 2.500L10 13z" fill={iconFaded} stroke="none" /></Ico>
                <span>Shape Outline</span><Caret $off />
              </SmallButton>
              <SmallButton $gap={3} $off>
                <Ico w={20} h={18} c={iconFaded}><path d="M5 3q1-2 3-2h8q2 0 2 2v7l-4 6H3q-2 0-2-3z" fill={iconFaded} /><path d="M6 4q1-2 3-2h6q2 0 1 2l-2 5q-1 2-3 2H5q-2 0-1-2z" fill="#f4eef6" stroke="none" /></Ico>
                <span>Shape Effects</span><Caret $off />
              </SmallButton>
            </Column>
          </GroupBody>
          <GroupFoot><span>Drawing</span><Launcher off /></GroupFoot>
        </Group>

        <Group $w={109}>
          <GroupBody $pad={8}>
            <Column $row={27} $left={0}>
              <SmallButton $gap={4}>
                <svg width="18" height="16" viewBox="0 0 18 16" aria-hidden="true"><path d="M0 9 2 4V1h1V0h3v1h1v3h4V1h1V0h3v1h1v3l2 5v7h-7v-6H7v6H0z" fill="#5f5f5f" /><path d="M2.500 6v8M15.500 6v8M4 2h2M12 2h2M8 7h2" stroke="#fff" /></svg>
                Find
              </SmallButton>
              <SmallButton $gap={2} $wide>
                <svg width="20" height="22" viewBox="0 0 20 22" aria-hidden="true" fontFamily="Open Sans, sans-serif" fontSize="9" fontWeight="600">
                  <text x="0" y="10" fill="#555">a<tspan fill="#aaa">b</tspan></text>
                  <text x="10" y="18" fill="#555">a<tspan fill="#2f6eb0">c</tspan></text>
                  <path d="M1.500 12v3H8M6 13l2 2-2 2" fill="none" stroke="#2f6eb0" strokeWidth="1.300" />
                </svg>
                Replace<Caret />
              </SmallButton>
              <SmallButton $gap={4}>
                <Ico w={18} h={18}><path d="M5.500 1v13l3-3 2.500 6 2-1-2.500-5.500H15z" fill="#fff" /></Ico>
                <span>Select</span><Caret />
              </SmallButton>
            </Column>
          </GroupBody>
          <GroupFoot><span>Editing</span></GroupFoot>
        </Group>
        <Collapse aria-label="Collapse the ribbon"><Ico w={12} h={8} sw={2}><path d="m1 7 5-5 5 5" /></Ico></Collapse>
      </Ribbon>

      <QuickBar>
        <QuickButton $right={16} aria-label="Save">
          <svg width="16" height="16" viewBox="0 0 16 16" aria-hidden="true"><path d="M0 0h16v16H2l-2-2z" fill="#8458a5" /><path d="M2.500 1.500h11v8h-11zM4 11h8v5H4z" fill="#fff" /><path d="M5 12h6v4H8v-2H7v2H5z" fill="#8458a5" /></svg>
        </QuickButton>
        <QuickButton $right={16} aria-label="Undo">
          <Ico w={18} h={17} c="#3f78b5" sw={3}><path d="M2 6h9c6 0 6 8 1 9M7 1 2 6l5 5" /></Ico><Caret />
        </QuickButton>
        <QuickButton $right={14} aria-label="Repeat">
          <Ico w={17} h={17} c="#a9a9a9" sw={3}><path d="M12 3a6 6 0 1 1-8 0M10 8V2h6" /></Ico>
        </QuickButton>
        <QuickButton $right={18} aria-label="Start from beginning">
          <Ico w={20} h={18}><path d="M0 1.500h18" strokeWidth="2" /><path d="M2.500 2v9.500h7M4 5.500h6M4 8.500h4M9.500 12v4M5 17h9" strokeWidth="1.300" /><circle cx="14.500" cy="8.500" r="5" fill="#fff" /><path d="m13 5.500 5 3-5 3z" fill="#459a78" stroke="none" /></Ico>
        </QuickButton>
        <QuickButton $right={0} aria-label="Customize quick access toolbar"><Ico w={7} h={7}><path d="M1 1h5" /><path d="M1 4h5L3.500 7z" fill={iconInk} stroke="none" /></Ico></QuickButton>
      </QuickBar>

      <Workspace>
        <SlidePane>
          <SlideList>
            {slides.map((S, i) => (
              <SlideItem key={i} $on={i === 0}>
                <SlideNumber>{i + 1}</SlideNumber>
                <Thumb $on={i === 0} aria-label={`Slide ${i + 1}`}><S /></Thumb>
              </SlideItem>
            ))}
          </SlideList>
          <ScrollBar $track="#e6e6e6">
            <ScrollButton aria-label="Scroll up"><UpTri /></ScrollButton>
            <ScrollThumb $share={401} /><ScrollRest $share={359} />
            <ScrollButton aria-label="Scroll down"><DownTri /></ScrollButton>
          </ScrollBar>
        </SlidePane>

        <Editor>
          <Workspace>
            <Stage>
              <Slide>
                <SlideTop />
                <SlideBottom />
                <Oval $x={30.7} $y={8.9} $w={35.7} $h={27.5}><BookTitle>فارسی ششم<br />دبستان</BookTitle></Oval>
                <Oval $x={37.2} $y={58.5} $w={22.8} $h={22}><LessonTitle>درس پانزدهم<br />میوه هنر</LessonTitle></Oval>
              </Slide>
            </Stage>
            <PagedScroll>
              <TallScroll $track="linear-gradient(#f6f6f6, #e6e6e6)">
                <ScrollButton aria-label="Scroll up"><UpTri /></ScrollButton>
                <ScrollThumb $share={65} /><ScrollRest $share={584} />
                <ScrollButton aria-label="Scroll down"><DownTri /></ScrollButton>
              </TallScroll>
              <PageButton aria-label="Previous slide"><Ico w={10} h={10}><path d="m5 0 4 5H1zM5 5l4 5H1z" fill={iconInk} stroke="none" /></Ico></PageButton>
              <PageButton aria-label="Next slide"><Ico w={10} h={10}><path d="m5 5 4-5H1zM5 10l4-5H1z" fill={iconInk} stroke="none" /></Ico></PageButton>
            </PagedScroll>
          </Workspace>
          <Notes>
            <input aria-label="Notes" placeholder="Click to add notes" />
            <Watermark><strong>Activate Windows</strong>Go to Settings to activate Windows.</Watermark>
          </Notes>
        </Editor>
      </Workspace>

      <StatusBar>
        <StatusItem $right={18}>SLIDE 1 OF 10</StatusItem>
        <StatusItem $right={17} aria-label="Spelling"><Ico w={18} h={15} c="#fff"><path d="M8.500 14V2L7 .5H.5v12H7zM8.500 2 10 .5h6.500V4M8.500 14l1.500-1.500h6.500V10" /><path d="m10.500 7 2.500 3 5-6" strokeWidth="1.800" /></Ico></StatusItem>
        <StatusItem $right={0}>PERSIAN</StatusItem>
        <StatusRight>
          <StatusItem $right={18}><Ico w={14} h={13} c="#fff"><path d="M7 0l4 4H3z" fill="#fff" stroke="none" /><path d="M0 6.500h14M0 9.500h14M0 12.500h8" /></Ico>NOTES</StatusItem>
          <StatusItem $right={19}><svg width="15" height="15" viewBox="0 0 15 15" aria-hidden="true"><path d="M0 0h15v11H8l-3 4v-4H0z" fill="#fff" /></svg>COMMENTS</StatusItem>
          <ViewButton $on aria-label="Normal"><Ico w={14} h={13} c="#fff" sw={1.5}><path d="M1 1h12v11H1zM4.500 1v11M4.500 9h8M7 4h4v2H7z" /></Ico></ViewButton>
          <ViewButton aria-label="Slide sorter"><svg width="14" height="13" viewBox="0 0 14 13" aria-hidden="true"><path d="M0 0h6v5.500H0zM8 0h6v5.500H8zM0 7.500h6V13H0zM8 7.500h6V13H8z" fill="#fff" /></svg></ViewButton>
          <ViewButton aria-label="Reading view"><Ico w={14} h={13} c="#fff"><path d="M7 13V2L5.500.5h-5v10h5L7 12l1.500-1.500h5V.5h-5L7 2M2 3.500h3M2 5.500h3M2 7.500h3M9 3.500h3M9 5.500h3M9 7.500h3" /></Ico></ViewButton>
          <ViewButton aria-label="Slide show"><Ico w={14} h={13} c="#fff"><path d="M0 .5h14M1.500 1v6.500h11V1M4 4h6M7 8v4M4 12.500h6" strokeWidth="1.200" /></Ico></ViewButton>
          <ZoomControl>
            <button aria-label="Zoom out"><Ico w={9} h={12} c="#fff" sw={2.5}><path d="M0 6h9" /></Ico></button>
            <input type="range" aria-label="Zoom" min={0} max={100} defaultValue={40} />
            <button aria-label="Zoom in"><Ico w={12} h={12} c="#fff" sw={2.5}><path d="M0 6h12M6 0v12" /></Ico></button>
          </ZoomControl>
          <ZoomValue>81 %</ZoomValue>
          <button aria-label="Fit to window"><Ico w={15} h={15} c="#fff"><path d="M.5.500h14v14H.500zM7.500 2v4M7.500 9v4M2 7.500h4M9 7.500h4M6 3.500 7.500 2 9 3.500M6 11.500 7.500 13 9 11.500M3.500 6 2 7.500 3.500 9M11.500 6 13 7.500 11.500 9" /></Ico></button>
        </StatusRight>
      </StatusBar>

      <TaskBar>
        <TaskButton $w={60} aria-label="Start"><svg width="20" height="20" viewBox="0 0 20 20"><path d="M0 3l8-1.200V9.500H0zM9 1.700 20 0v9.500H9zM0 10.500h8v7.700L0 17zM9 10.500h11V20L9 18.400z" fill="#fff" /></svg></TaskButton>
        <TaskButton $w={60} aria-label="Search"><Ico w={20} h={20} c="#fff" sw={1.5}><circle cx="12.500" cy="7.500" r="6.500" /><path d="m8 12-7 7" /></Ico></TaskButton>
        <TaskButton $w={60} aria-label="Task view"><Ico w={24} h={20} c="#fff" sw={1.3}><path d="M4.500 1h15v18h-15zM2.500 4H.7v12h1.800M21.500 4h1.800v12h-1.800" /></Ico></TaskButton>
        <TaskButton $w={65} aria-label="Calculator"><CalcIcon /></TaskButton>
        <TaskButton $w={62} aria-label="WhatsApp">
          <svg width="28" height="28" viewBox="0 0 28 28"><path d="M1 27l2-7A13 13 0 1 1 8 25z" fill="#fff" /><path d="m3.500 24.500 1.500-5A11 11 0 1 1 9 23z" fill="#2bb741" /><path d="M9 8c2-2 3 0 4 3l-2 2c1 2 3 4 5 4l2-2c3 1 4 2 3 4-3 3-7 1-10-2s-4-6-2-9z" fill="#fff" /></svg>
        </TaskButton>
        <TaskButton $w={62} aria-label="Psiphon">
          <svg width="30" height="30" viewBox="0 0 30 30"><circle cx="15" cy="15" r="15" fill="#b5402a" /><path d="M9 6h9c8 0 7 13-1 13h-3l-1 6H9l3-15h4l-1 5h2c3 0 3-5 0-5H8z" fill="#fff" /></svg>
        </TaskButton>
        <TaskButton $w={62} $run aria-label="File Explorer">
          <svg width="28" height="26" viewBox="0 0 28 26"><path d="M0 2h10l2 3h16v19H0z" fill="#f8d775" /><path d="M2 1h9v3H2z" fill="#e8a33d" /><path d="M0 7h28v17H0z" fill="#fbe08b" /><path d="M5 14h18v11h-4v-6h-10v6H5z" fill="#3fa9dd" /></svg>
        </TaskButton>
        <TaskButton $w={62} aria-label="NordVPN">
          <svg width="26" height="26" viewBox="0 0 26 26"><circle cx="13" cy="13" r="13" fill="#2f6eb0" /><path d="M4 22a11 11 0 0 1 9-18 11 11 0 0 1 9 18l-6-9-2 3-2-5z" fill="#e9f1f8" /><path d="m4 22 8-13 2 4 2-2 6 11a13 13 0 0 1-18 0z" fill="#1e4f91" /></svg>
        </TaskButton>
        <TaskButton $w={62} $run aria-label="Firefox">
          <svg width="28" height="28" viewBox="0 0 28 28"><circle cx="14" cy="15" r="13" fill="#ff7a2b" /><path d="M17 0c8 5 11 10 10 17-1 5-4 9-9 10 5-5 6-10 3-14-3-3-5-7-4-13z" fill="#ffcb3c" /><path d="M2 6l3 2 4-2c1 3 4 2 4 4l-3 3z" fill="#ffb02e" /><path d="M3 18c3 8 14 10 20 3-3 8-15 9-20-3z" fill="#f0305c" /><circle cx="14" cy="16" r="5.500" fill="#8044d8" /></svg>
        </TaskButton>
        <TaskButton $w={62} $run aria-label="Chrome">
          <svg width="28" height="28" viewBox="0 0 28 28"><circle cx="14" cy="14" r="14" fill="#dd4b3e" /><path d="M2 7l6 10 6 4-4 7A14 14 0 0 1 2 7z" fill="#2da153" /><path d="M14 8h12.500a14 14 0 0 1-14.500 20l7-10z" fill="#fdc93a" /><circle cx="14" cy="14" r="6.500" fill="#fff" /><circle cx="14" cy="14" r="5" fill="#4285f4" /></svg>
        </TaskButton>
        <TaskButton $w={62} $run aria-label="Word"><OfficeLogo letter="W" color="#2b579a" dark="#2b579a" size={28} /></TaskButton>
        <TaskButton $w={62} $run aria-label="Paint">
          <svg width="30" height="28" viewBox="0 0 30 28"><path d="M1 17C1 8 12 2 20 5s9 12 4 17-11 6-14 4 2-6-1-7-8 2-8-2z" fill="#d7e9f2" /><circle cx="6" cy="15" r="2.500" fill="#de4b3c" /><circle cx="10" cy="10" r="2.500" fill="#58b947" /><circle cx="16" cy="8" r="2.500" fill="#f5b93c" /><circle cx="13" cy="17" r="2" fill="#222" /><path d="m16 28 9-21" stroke="#d98432" strokeWidth="2" /><path d="m23 7 2-6 5 2-3 5z" fill="#d9a66b" /></svg>
        </TaskButton>
        <TaskButton $w={62} aria-label="Telegram">
          <svg width="28" height="28" viewBox="0 0 28 28"><circle cx="14" cy="14" r="14" fill="#2a9fd8" /><path d="M5 14 22 7l-3 15-6-4-2 3-1-5z" fill="#fff" /><path d="m10 16 9-6-6 8-2 3z" fill="#b6d7ea" /></svg>
        </TaskButton>
        <TaskButton $w={62} $on aria-label="PowerPoint"><OfficeLogo letter="P" color="#d24726" dark="#d24726" size={28} /></TaskButton>
        <Tray>
          <TrayButton $right={15} aria-label="Hidden icons"><Ico w={16} h={10} c="#fff" sw={1.5}><path d="m1 9 7-8 7 8" /></Ico></TrayButton>
          <TrayButton $right={10} aria-label="Network"><Ico w={16} h={16} c="#ddd" sw={1.3}><path d="M1 16C1 7 7 1 16 1M4.500 16C5 9 9 5 16 4.500M8 16c0-5 4-8 8-8" /><path d="M11.500 16c0-3 2-4.500 4.500-4.500" /><circle cx="14" cy="14.500" r="1.500" fill="#fff" stroke="none" /></Ico></TrayButton>
          <TrayButton $right={20} aria-label="Volume"><Ico w={21} h={16} c="#fff" sw={1.3}><path d="M1 5.500h3l4-4v13l-4-4H1zM11 5.500c1 2 1 3 0 5M14 3.500c2 3 2 6 0 9" /><path d="M17 1.500c3 4 3 9 0 13" stroke="#777" /></Ico></TrayButton>
          <TrayText $right={20}><span>فا</span><span>FA</span></TrayText>
          <TrayText $right={22}><span dir="ltr">05:57 ب.ظ</span><span dir="ltr">۱۳۹۹/۰۸/۱۱</span></TrayText>
          <TrayButton $right={24} aria-label="Notifications"><Ico w={21} h={20} c="#fff" sw={1.5}><path d="M1 1h19v15h-6l-3.500 3L7 16H1z" /></Ico></TrayButton>
          <Edge />
        </Tray>
      </TaskBar>
    </App_>
  );
}
